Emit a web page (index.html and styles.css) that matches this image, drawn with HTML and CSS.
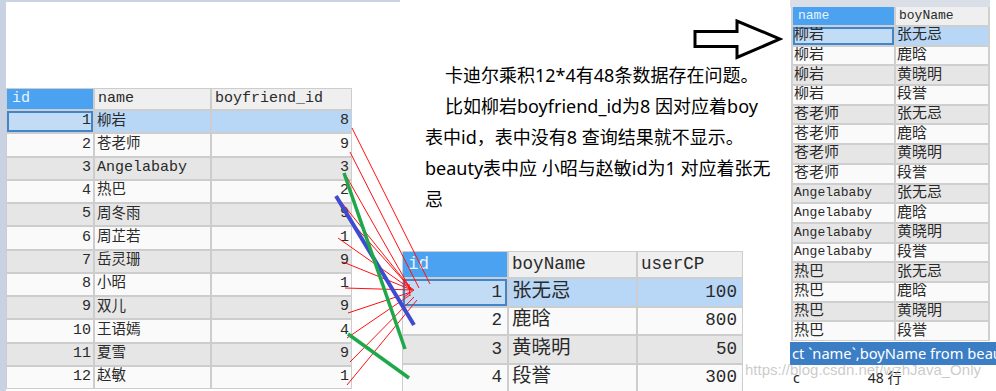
FILE: index.html
```html
<!DOCTYPE html>
<html lang="zh">
<head>
<meta charset="utf-8">
<title>笛卡尔乘积</title>
<link rel="stylesheet" href="styles.css">
</head>
<body>
<div class="page">
  <section class="left">
    <div class="grid g-left">
      <div class="row head"><div class="c hsel">id</div><div class="c">name</div><div class="c">boyfriend_id</div></div>
      <div class="row sel"><div class="c num focus">1</div><div class="c cj">柳岩</div><div class="c num">8</div></div>
      <div class="row"><div class="c num">2</div><div class="c cj">苍老师</div><div class="c num">9</div></div>
      <div class="row alt"><div class="c num">3</div><div class="c">Angelababy</div><div class="c num">3</div></div>
      <div class="row"><div class="c num">4</div><div class="c cj">热巴</div><div class="c num">2</div></div>
      <div class="row alt"><div class="c num">5</div><div class="c cj">周冬雨</div><div class="c num">9</div></div>
      <div class="row"><div class="c num">6</div><div class="c cj">周芷若</div><div class="c num">1</div></div>
      <div class="row alt"><div class="c num">7</div><div class="c cj">岳灵珊</div><div class="c num">9</div></div>
      <div class="row"><div class="c num">8</div><div class="c cj">小昭</div><div class="c num">1</div></div>
      <div class="row alt"><div class="c num">9</div><div class="c cj">双儿</div><div class="c num">9</div></div>
      <div class="row"><div class="c num">10</div><div class="c cj">王语嫣</div><div class="c num">4</div></div>
      <div class="row alt"><div class="c num">11</div><div class="c cj">夏雪</div><div class="c num">9</div></div>
      <div class="row"><div class="c num">12</div><div class="c cj">赵敏</div><div class="c num">1</div></div>
    </div>
  </section>

  <section class="mid">
    <svg class="arrow" viewBox="0 0 90 41" width="90" height="41" aria-hidden="true">
      <polygon points="2,12.5 44,12.5 44,2 87,20 44,38.5 44,27.5 2,27.5" fill="#fff" stroke="#000" stroke-width="3" stroke-linejoin="miter"/>
    </svg>
    <div class="note">
      <p class="ind">卡迪尔乘积12*4有48条数据存在问题。</p>
      <p class="ind">比如柳岩boyfriend_id为8 因对应着boy</p>
      <p>表中id，表中没有8 查询结果就不显示。</p>
      <p>beauty表中应 小昭与赵敏id为1 对应着张无</p>
      <p>忌</p>
    </div>
    <div class="grid g-mid">
      <div class="row head"><div class="c hsel">id</div><div class="c">boyName</div><div class="c">userCP</div></div>
      <div class="row sel"><div class="c num focus">1</div><div class="c cj">张无忌</div><div class="c num">100</div></div>
      <div class="row"><div class="c num">2</div><div class="c cj">鹿晗</div><div class="c num">800</div></div>
      <div class="row alt"><div class="c num">3</div><div class="c cj">黄晓明</div><div class="c num">50</div></div>
      <div class="row"><div class="c num">4</div><div class="c cj">段誉</div><div class="c num">300</div></div>
    </div>
  </section>

  <section class="right">
    <div class="rtop"></div>
    <div class="rwrap">
      <div class="grid g-right">
        <div class="row head"><div class="c hsel">name</div><div class="c">boyName</div></div>
        <div class="row sel"><div class="c cj focus">柳岩</div><div class="c cj">张无忌</div></div>
        <div class="row"><div class="c cj">柳岩</div><div class="c cj">鹿晗</div></div>
        <div class="row alt"><div class="c cj">柳岩</div><div class="c cj">黄晓明</div></div>
        <div class="row"><div class="c cj">柳岩</div><div class="c cj">段誉</div></div>
        <div class="row alt"><div class="c cj">苍老师</div><div class="c cj">张无忌</div></div>
        <div class="row"><div class="c cj">苍老师</div><div class="c cj">鹿晗</div></div>
        <div class="row alt"><div class="c cj">苍老师</div><div class="c cj">黄晓明</div></div>
        <div class="row"><div class="c cj">苍老师</div><div class="c cj">段誉</div></div>
        <div class="row alt"><div class="c">Angelababy</div><div class="c cj">张无忌</div></div>
        <div class="row"><div class="c">Angelababy</div><div class="c cj">鹿晗</div></div>
        <div class="row alt"><div class="c">Angelababy</div><div class="c cj">黄晓明</div></div>
        <div class="row"><div class="c">Angelababy</div><div class="c cj">段誉</div></div>
        <div class="row alt"><div class="c cj">热巴</div><div class="c cj">张无忌</div></div>
        <div class="row"><div class="c cj">热巴</div><div class="c cj">鹿晗</div></div>
        <div class="row alt"><div class="c cj">热巴</div><div class="c cj">黄晓明</div></div>
        <div class="row"><div class="c cj">热巴</div><div class="c cj">段誉</div></div>
      </div>
    </div>
    <div class="bar">ct `name`,boyName from beau</div>
    <div class="status"><span class="st-a">c</span><span class="st-b">48 行</span></div>
  </section>

  <svg class="links" viewBox="0 0 996 391" width="996" height="391" aria-hidden="true">
    <g stroke="#ff1010" stroke-width="1" fill="none">
      <line x1="352" y1="128" x2="430" y2="284"/>
      <line x1="350" y1="152" x2="419" y2="288"/>
      <line x1="345" y1="174" x2="411" y2="290"/>
      <line x1="338" y1="198" x2="412" y2="290"/>
      <line x1="346" y1="216" x2="412" y2="290"/>
      <line x1="338" y1="238" x2="412" y2="290"/>
      <line x1="343" y1="262" x2="412" y2="290"/>
      <line x1="345" y1="288" x2="413" y2="290"/>
      <line x1="348" y1="313" x2="411" y2="292"/>
      <line x1="347" y1="338" x2="410" y2="295"/>
      <line x1="350" y1="362" x2="414" y2="297"/>
      <line x1="347" y1="385" x2="417" y2="300"/>
      <line x1="404" y1="283" x2="414" y2="290"/>
      <line x1="404" y1="297" x2="414" y2="290"/>
      <line x1="409" y1="284" x2="410" y2="296"/>
    </g>
    <line x1="336" y1="196" x2="414" y2="325" stroke="#3e4bd0" stroke-width="4"/>
    <line x1="344" y1="173" x2="405" y2="349" stroke="#1ea84a" stroke-width="3.5"/>
    <line x1="348" y1="334" x2="409" y2="378" stroke="#1ea84a" stroke-width="3.5"/>
  </svg>

  <div class="watermark">https://blog.csdn.net/wzhJava_Only</div>
</div>
</body>
</html>
```

FILE: styles.css
```css
* {
  box-sizing: border-box;
  margin: 0;
  padding: 0;
}

html, body {
  width: 996px;
  height: 391px;
  overflow: hidden;
  background: #ffffff;
}

.page {
  position: relative;
  display: flex;
  width: 996px;
  height: 391px;
}

/* ---------- generic grid table ---------- */
.grid {
  display: grid;
  width: max-content;
  background: #cdcdcd;
  padding: 1px;
  gap: 2px;
}

.row {
  display: contents;
}

.c {
  display: flex;
  align-items: center;
  padding: 0 2px;
  background: #fafafa;
  color: #2a2a2a;
  font-family: "Liberation Mono", "Noto Sans CJK SC", monospace;
  line-height: 1.1;
  white-space: nowrap;
  overflow: hidden;
}

.row.alt .c {
  background: #e6e6e6;
}

.row.sel .c {
  background: #b8d6f5;
}

.row.sel .c.focus {
  background: #c3dcf5;
  box-shadow: inset 0 0 0 2px #3f86cf;
}

.row.head .c {
  background: #efefef;
  padding-left: 3px;
}

.row.head .c.hsel {
  background: #4aa2f0;
  color: #e9f3ff;
  padding-left: 5px;
}

.num {
  justify-content: flex-end;
}

/* ---------- left panel ---------- */
.left {
  width: 400px;
  flex: none;
  border-left: 6px solid #c9d2e3;
  border-top: 2px solid #c9d2e3;
  padding-top: 86px;
}

.g-left {
  grid-template-columns: 86px 115px 139px;
  grid-template-rows: 20px;
  grid-auto-rows: 21.25px;
  font-size: 15px;
}

.g-left .cj {
  font-size: 14.5px;
}

.g-left .num {
  padding-right: 2px;
}

/* ---------- middle column ---------- */
.mid {
  width: 390px;
  flex: none;
  display: flex;
  flex-direction: column;
}

.arrow {
  display: block;
  align-self: flex-end;
  margin: 19px 7px 0 0;
  flex: none;
}

.note {
  padding-left: 25px;
  font-family: "Noto Sans", "Noto Sans CJK SC", sans-serif;
  font-size: 18px;
  line-height: 31px;
  color: #000;
  white-space: nowrap;
}

.note .ind {
  padding-left: 20px;
}

.g-mid {
  margin: 36px 0 0 2px;
  grid-template-columns: 104px 127px 104px;
  grid-template-rows: 25px;
  grid-auto-rows: 26.5px;
  font-size: 17.6px;
}

.g-mid .cj {
  font-size: 19.5px;
  padding-left: 3px;
}

.g-mid .num {
  padding-right: 5px;
}

/* ---------- right panel ---------- */
.right {
  width: 206px;
  flex: none;
  display: flex;
  flex-direction: column;
}

.rtop {
  height: 7px;
  width: 200px;
  background: #d9dee7;
  flex: none;
}

.rwrap {
  height: 335px;
  overflow: hidden;
  padding-left: 1px;
  flex: none;
}

.g-right {
  grid-template-columns: 101px 92px;
  grid-template-rows: 18px;
  grid-auto-rows: 17.7px;
  font-size: 13px;
  padding: 0 2px 1px 2px;
  background: #cfcfcf;
}

.g-right .cj {
  font-size: 15px;
  line-height: 1;
}

.g-right .c {
  padding-left: 1px;
}

.bar {
  height: 23px;
  flex: none;
  display: flex;
  align-items: center;
  padding-left: 2px;
  background: #3b7ec5;
  color: #ffffff;
  font-family: "Noto Sans", sans-serif;
  font-size: 14.7px;
  line-height: 1.2;
  white-space: nowrap;
  overflow: hidden;
}

.status {
  height: 26px;
  flex: none;
  display: flex;
  align-items: center;
  padding-left: 3px;
  font-family: "Noto Sans", "Noto Sans CJK SC", sans-serif;
  font-size: 14px;
  line-height: 1.2;
  color: #222;
}

.st-b {
  margin-left: 68px;
}

/* ---------- overlays ---------- */
.links {
  position: absolute;
  left: 0;
  top: 0;
  pointer-events: none;
}

.watermark {
  position: absolute;
  left: 745px;
  top: 361px;
  font-family: "Liberation Sans", sans-serif;
  font-size: 15px;
  color: rgba(150, 150, 150, 0.5);
  white-space: nowrap;
  pointer-events: none;
}
```
